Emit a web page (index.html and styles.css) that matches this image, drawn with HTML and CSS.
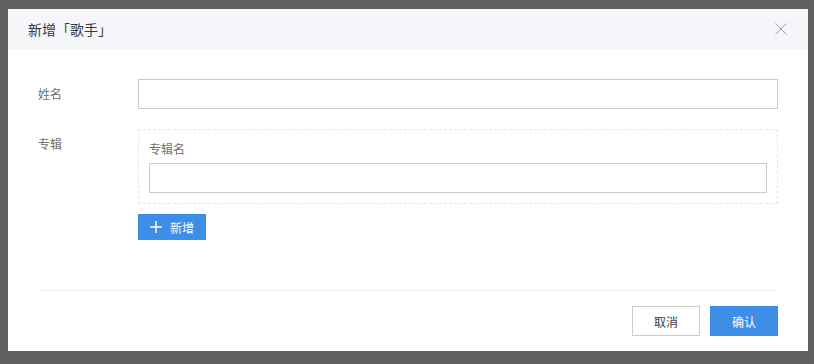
FILE: index.html
```html
<!DOCTYPE html>
<html lang="zh">
<head>
<meta charset="utf-8">
<title>新增「歌手」</title>
<link rel="stylesheet" href="styles.css">
</head>
<body>
<div class="overlay">
  <div class="modal">
    <div class="modal-header">
      <span class="modal-title">新增「歌手」</span>
      <svg class="close" width="12" height="12" viewBox="0 0 12 12"><path d="M0.5 0.5L11.5 11.5M11.5 0.5L0.5 11.5" stroke="#a0a0a0" stroke-width="1" fill="none"/></svg>
    </div>
    <div class="modal-body">
      <div class="form-row">
        <label class="form-label">姓名</label>
        <div class="form-control"><input class="input" type="text"></div>
      </div>
      <div class="form-row">
        <label class="form-label">专辑</label>
        <div class="form-control">
          <div class="group">
            <div class="group-label">专辑名</div>
            <input class="input" type="text">
          </div>
          <button class="btn btn-primary btn-add">
            <svg width="12" height="12" viewBox="0 0 12 12"><path d="M6 0V12M0 6H12" stroke="#fff" stroke-width="1.4" fill="none"/></svg>
            <span>新增</span>
          </button>
        </div>
      </div>
    </div>
    <div class="modal-footer">
      <button class="btn btn-default">取消</button>
      <button class="btn btn-primary">确认</button>
    </div>
  </div>
</div>
</body>
</html>
```
FILE: styles.css
```css
* { box-sizing: border-box; }
html, body { margin: 0; padding: 0; }
body {
  background: #5f5f5f;
  font-family: "Noto Sans CJK SC", "Noto Sans", sans-serif;
  width: 814px;
  height: 364px;
  overflow: hidden;
}
.overlay {
  padding: 9px 6px 0 8px;
}
.modal {
  width: 800px;
  height: 342px;
  background: #fff;
  display: flex;
  flex-direction: column;
}
.modal-header {
  height: 40px;
  background: #f5f6fa;
  display: flex;
  align-items: center;
  justify-content: space-between;
  padding: 0 21px 0 20px;
}
.modal-title {
  font-size: 14px;
  color: #3a3a3a;
  line-height: 20px;
}
.close { display: block; }
.modal-body {
  padding: 30px 30px 0 30px;
  flex: 1;
}
.form-row {
  display: flex;
  margin-bottom: 20px;
}
.form-label {
  width: 100px;
  flex: none;
  font-size: 12px;
  line-height: 29px;
  color: #707070;
}
.form-control {
  flex: 1;
}
.input {
  display: block;
  width: 100%;
  height: 30px;
  border: 1px solid #cccccc;
  margin: 0;
  padding: 0 8px;
  outline: none;
  background: #fff;
}
.group {
  border: 1px dashed #e6e6e6;
  padding: 10px 10px 10px;
}
.group-label {
  font-size: 12px;
  color: #707070;
  line-height: 18px;
  margin-bottom: 5px;
}
.btn {
  font-family: inherit;
  font-size: 12px;
  height: 30px;
  width: 68px;
  border: 1px solid #ccc;
  background: #fff;
  color: #3a3a3a;
  padding: 0;
  display: inline-flex;
  align-items: center;
  justify-content: center;
}
.btn-primary {
  background: #3d8ee6;
  border-color: #3d8ee6;
  color: #fff;
}
.btn-add {
  margin-top: 10px;
  height: 26px;
  gap: 8px;
  display: flex;
}
.modal-footer {
  margin: 0 30px;
  border-top: 1px solid #ebebf5;
  padding: 15px 0 15px;
  display: flex;
  justify-content: flex-end;
  gap: 10px;
}
```
